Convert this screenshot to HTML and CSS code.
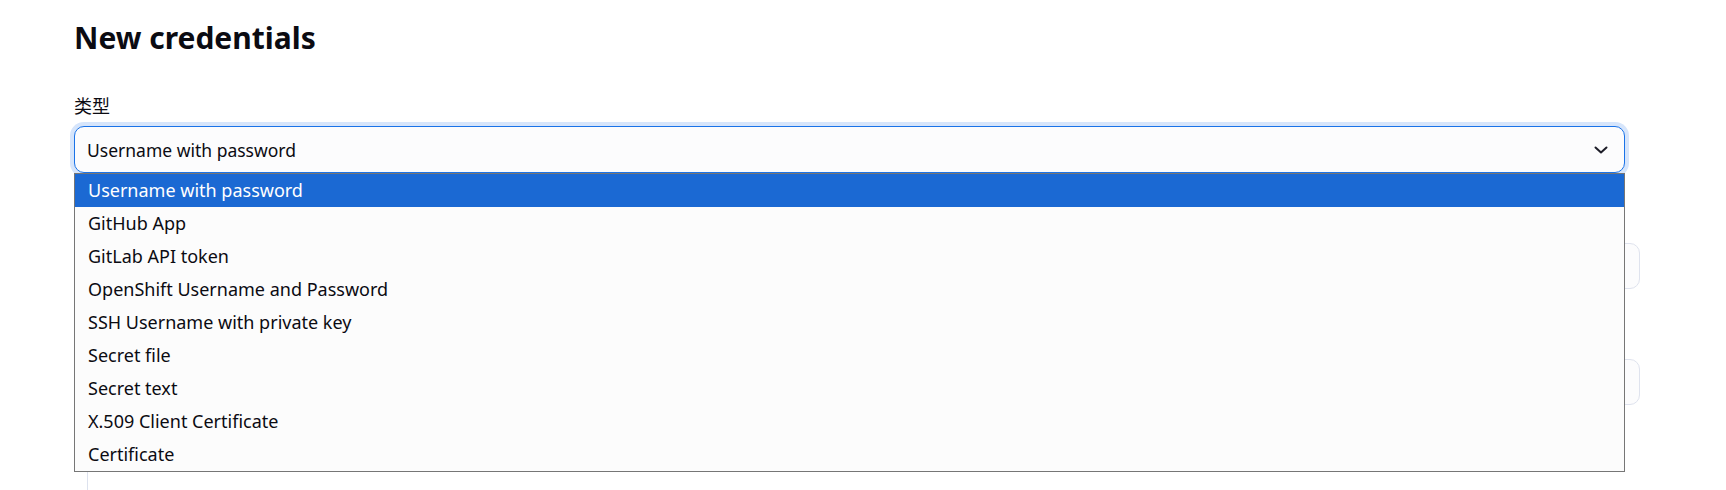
FILE: index.html
```html
<!DOCTYPE html>
<html>
<head lang="zh">
    <meta charset="UTF-8">
    <title>New credentials</title>
    <link rel="stylesheet" href="styles.css">
</head>
<body>
<div id="page">
    <h1 class="title">New credentials</h1>
    <div class="field">
        <label class="label">类型</label>
        <div class="select-wrap">
            <div class="select">
                <span>Username with password</span>
                <svg class="chevron" width="14" height="8" viewBox="0 0 14 8">
                    <path d="M1.5 1.5 L7 6.5 L12.5 1.5" fill="none" stroke="#1d1d28" stroke-width="2" stroke-linecap="round" stroke-linejoin="round"/>
                </svg>
            </div>
            <ul class="options">
                <li class="selected">Username with password</li>
                <li>GitHub App</li>
                <li>GitLab API token</li>
                <li>OpenShift Username and Password</li>
                <li>SSH Username with private key</li>
                <li>Secret file</li>
                <li>Secret text</li>
                <li>X.509 Client Certificate</li>
                <li>Certificate</li>
            </ul>
        </div>
    </div>
    <div class="nested">
        <div class="row">
            <div class="input"></div>
        </div>
        <div class="row">
            <div class="input"></div>
        </div>
    </div>
</div>
</body>
</html>
```

FILE: styles.css
```css
*{
    margin: 0;
    padding: 0;
    box-sizing: border-box;
}
body{
    background: #ffffff;
    color: #14141f;
    font-family: "Noto Sans", "Noto Sans CJK SC", sans-serif;
    overflow: hidden;
}
ul{
    list-style: none;
}
#page{
    width: 1566px;
    margin-left: 74px;
    padding-top: 18px;
}
.title{
    font-size: 30px;
    font-weight: 700;
    line-height: 40px;
    color: #0b0b12;
    margin-bottom: 37px;
}
.field{
    margin-bottom: 24px;
}
.label{
    display: block;
    font-family: "Noto Sans CJK SC", sans-serif;
    font-size: 18px;
    line-height: 20px;
    margin-bottom: 11px;
    color: #0b0b12;
}
.select-wrap{
    position: relative;
    width: 1551px;
}
.select{
    height: 47px;
    border: 1px solid #1a73e8;
    border-radius: 10px;
    box-shadow: 0 0 0 4px #d6e5fb;
    background: #fcfcfd;
    display: flex;
    align-items: center;
    justify-content: space-between;
    padding: 0 16px 0 12px;
    font-size: 17.5px;
    color: #0b0b12;
}
.options{
    position: absolute;
    left: 0;
    top: 47px;
    width: 100%;
    z-index: 10;
    background: #fcfcfc;
    border: 1px solid #767676;
    font-size: 18px;
    color: #0b0b12;
}
.options li{
    height: 33px;
    line-height: 33px;
    padding-left: 13px;
}
.options li.selected{
    background: #1b69d3;
    color: #ffffff;
}
.nested{
    margin-left: 13px;
    border-left: 1px solid #dde2ee;
    padding-left: 16px;
    padding-top: 16px;
    height: 300px;
}
.row{
    padding-top: 30px;
    margin-bottom: 40px;
}
.input{
    height: 46px;
    border: 1px solid #dfe3ee;
    border-radius: 10px;
    background: #fcfcfd;
}
```
